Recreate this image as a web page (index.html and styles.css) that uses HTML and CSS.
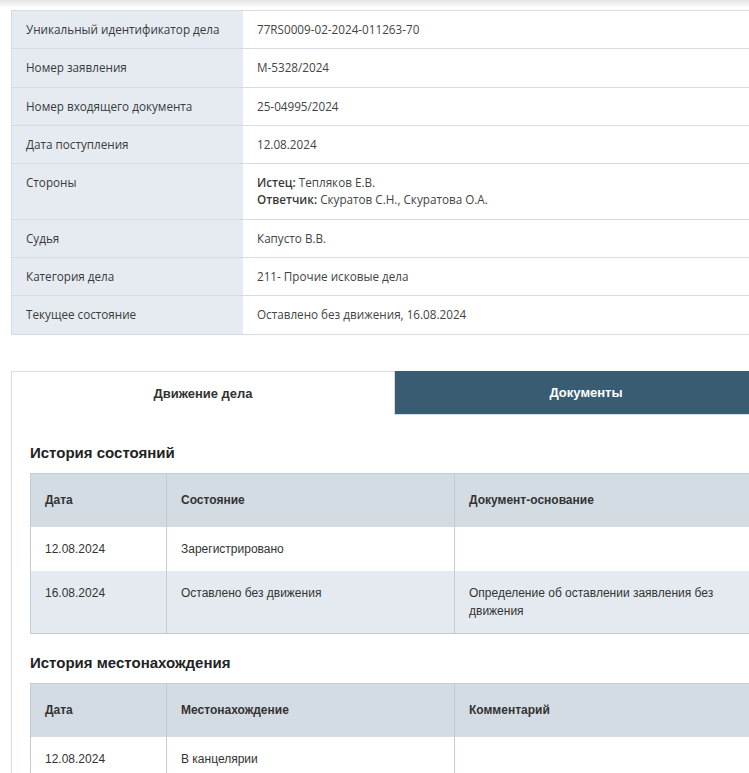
FILE: index.html
```html
<!DOCTYPE html>
<html lang="ru">
    <head>
        <meta charset="UTF-8" />
        <title>Карточка дела</title>
        <link rel="stylesheet" href="styles.css">
    </head>
    <body>
        <div class="shadow"></div>

        <table class="info">
            <tr><td class="lbl">Уникальный идентификатор дела</td><td>77RS0009-02-2024-011263-70</td></tr>
            <tr><td class="lbl">Номер заявления</td><td>М-5328/2024</td></tr>
            <tr><td class="lbl">Номер входящего документа</td><td>25-04995/2024</td></tr>
            <tr><td class="lbl">Дата поступления</td><td>12.08.2024</td></tr>
            <tr>
                <td class="lbl">Стороны</td>
                <td><b>Истец:</b> Тепляков Е.В.<br><b>Ответчик:</b> Скуратов С.Н., Скуратова О.А.</td>
            </tr>
            <tr><td class="lbl">Судья</td><td>Капусто В.В.</td></tr>
            <tr><td class="lbl">Категория дела</td><td>211- Прочие исковые дела</td></tr>
            <tr><td class="lbl">Текущее состояние</td><td>Оставлено без движения, 16.08.2024</td></tr>
        </table>

        <div class="tabs">
            <div class="tab active">Движение дела</div>
            <div class="tab">Документы</div>
        </div>

        <div class="panel">
            <h2>История состояний</h2>
            <table class="hist">
                <tr><th class="c1">Дата</th><th class="c2">Состояние</th><th>Документ-основание</th></tr>
                <tr><td>12.08.2024</td><td>Зарегистрировано</td><td></td></tr>
                <tr class="odd"><td>16.08.2024</td><td>Оставлено без движения</td><td>Определение об оставлении заявления без движения</td></tr>
            </table>

            <h2>История местонахождения</h2>
            <table class="hist">
                <tr><th class="c1">Дата</th><th class="c2">Местонахождение</th><th>Комментарий</th></tr>
                <tr><td>12.08.2024</td><td>В канцелярии</td><td></td></tr>
            </table>
        </div>
    </body>
</html>
```

FILE: styles.css
```css
html, body
{
    margin: 0;
    padding: 0;
    overflow: hidden;
    background: #fff;
}

body
{
    width: 749px;
    height: 773px;
    font-family: "Liberation Sans", Arial, sans-serif;
    color: #333;
}

.shadow
{
    height: 10px;
    background: linear-gradient(#e4e4e4, #fff 8px);
}

/* верхняя таблица */
.info
{
    margin-left: 11px;
    width: 766px;
    border-collapse: collapse;
    font-family: "Open Sans", sans-serif;
    font-size: 11.7px;
    color: #444;
}

.info td
{
    border-top: 1px solid #d5dbe3;
    border-bottom: 1px solid #d5dbe3;
    padding: 10px 14px;
    line-height: 17.3px;
    vertical-align: top;
}

.info td.lbl
{
    width: 203px;
    background: #e6ebf2;
    border-left: 1px solid #d5dbe3;
    color: #3a3a3a;
}

.info b
{
    font-weight: 600;
    color: #3a3a3a;
}

/* вкладки */
.tabs
{
    display: flex;
    margin: 36px 0 0 11px;
    width: 766px;
}

.tab
{
    flex: 1;
    height: 44px;
    line-height: 44px;
    text-align: center;
    font-size: 13px;
    font-weight: bold;
    background: #3a5c73;
    color: #fff;
    border-bottom: 1px solid #d5dbe3;
    border-left: 1px solid #d5dbe3;
    box-sizing: border-box;
}

.tab.active
{
    background: #fff;
    color: #333;
    border: 1px solid #d8dde3;
    border-right: none;
    border-bottom: none;
    height: 45px;
}

.panel
{
    margin-left: 11px;
    width: 766px;
    box-sizing: border-box;
    border-left: 1px solid #d8dde3;
    padding: 27px 18px 40px 18px;
}

h2
{
    margin: 0 0 10px 0;
    font-size: 15px;
    line-height: 20px;
    font-weight: bold;
    color: #222;
}

.hist
{
    width: 100%;
    border-collapse: collapse;
    font-size: 12px;
    margin-bottom: 19px;
    border: 1px solid #c3ccd5;
}

.hist th
{
    background: #d3dce3;
    text-align: left;
    font-weight: bold;
    padding: 17px 14px 18px;
    line-height: 18px;
    border-left: 1px solid #c3ccd5;
    color: #333;
}

.hist td
{
    padding: 13px 14px 13px;
    line-height: 18px;
    vertical-align: top;
    border-left: 1px solid #c3ccd5;
}

.hist tr.odd td
{
    background: #e5eaf1;
}

.hist .c1
{
    width: 107px;
}

.hist .c2
{
    width: 259px;
}
```
